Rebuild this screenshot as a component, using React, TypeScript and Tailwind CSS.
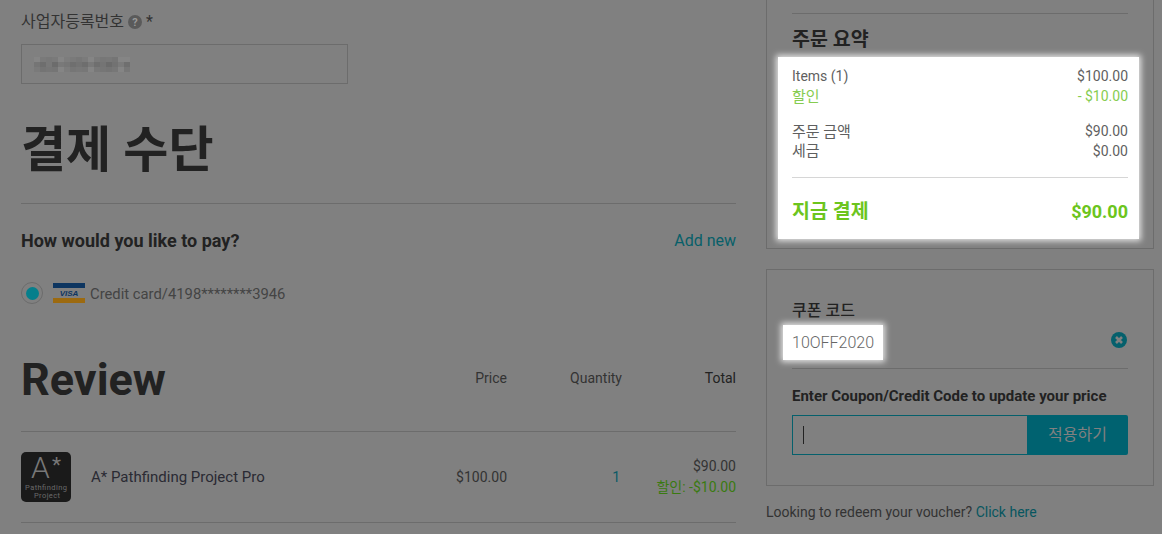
const font = "font-['Roboto','Noto_Sans_CJK_KR',sans-serif]";

// blurred business number, 6x5 cells
const mosaic = [
  ["#858585", "#7a7a7a", "#787878", "#7a7a7a", "#858585", "#7d7d7d", "#7a7a7a", "#777", "#7b7b7b", "#858585", "#7a7a7a", "#777", "#787878", "#757575", "#858585", "#858585"],
  ["#757575", "#6e6e6e", "#787878", "#6c6c6c", "#797979", "#767676", "#6f6f6f", "#737373", "#6e6e6e", "#797979", "#6f6f6f", "#747474", "#6b6b6b", "#727272", "#7b7b7b", "#6f6f6f"],
  ["#7a7a7a", "#747474", "#767676", "#757575", "#858585", "#7c7c7c", "#767676", "#787878", "#777", "#858585", "#787878", "#767676", "#747474", "#777", "#858585", "#777"],
];

const Spot = ({ className, children }: { className: string; children: React.ReactNode }) => (
  <div className={`bg-white shadow-[0_0_6px_2px_rgba(255,255,255,0.8)] ${className}`}>{children}</div>
);

const SummaryRow = ({ label, value, tone }: { label: React.ReactNode; value: string; tone: string }) => (
  <div className={`flex h-5 items-center justify-between text-sm ${tone}`}>
    <span>{label}</span>
    <span>{value}</span>
  </div>
);

const VisaCard = () => (
  <svg width="32" height="20" viewBox="0 0 32 20" className="shrink-0">
    <rect width="32" height="20" fill="#808080" />
    <rect width="32" height="5" fill="#0d3560" />
    <rect y="15" width="32" height="5" fill="#9c6a10" />
    <text x="16" y="13" textAnchor="middle" fontSize="8" fontWeight="700" fontStyle="italic" fill="#0d3560" fontFamily="Liberation Sans">VISA</text>
  </svg>
);

const ProductLogo = () => (
  <svg width="50" height="50" viewBox="0 0 50 50" className="shrink-0 overflow-visible" fontFamily="Roboto">
    <rect width="50" height="50" rx="5" fill="#1a1a1a" />
    <text x="10" y="26" fontSize="30" fontWeight="300" fill="#777">A</text>
    <text x="31" y="20" fontSize="21" fill="#777">*</text>
    <text x="4" y="38" fontSize="7.5" textLength="42" fill="#6a6a6a">Pathfinding</text>
    <text x="13" y="46" fontSize="7.5" textLength="26" fill="#6a6a6a">Project</text>
  </svg>
);

export default function App() {
  return (
    <div className={`flex h-[534px] w-[1162px] overflow-hidden bg-[#808080] text-[#222] ${font}`}>
      {/* left column */}
      <div className="ml-[21px] w-[715px] shrink-0">
        <div className="flex h-[44px] items-center gap-[4px] text-[16px] leading-none text-[#333]">
          <span>사업자등록번호</span>
          <span className="flex h-[14px] w-[14px] items-center justify-center rounded-full bg-[#5a5a5a] text-[11px] font-bold text-[#999]">?</span>
          <span>*</span>
        </div>
        <div className="flex h-[40px] w-[327px] items-center border border-[#6c6c6c] pl-3">
          <svg width="96" height="15" className="shrink-0">
            {mosaic.map((row, y) =>
              row.map((c, x) => <rect key={`${x}-${y}`} x={x * 6} y={y * 5} width="6" height="5" fill={c} />),
            )}
          </svg>
        </div>
        <h1 className="mt-[35px] text-[49px] leading-[64px] font-bold text-[#222]">결제 수단</h1>
        <div className="mt-[20px] border-t border-[#6c6c6c]" />
        <div className="mt-[27px] flex items-center justify-between">
          <span className="text-[18px] leading-5 font-bold">How would you like to pay?</span>
          <span className="text-[16px] leading-5 text-[#075f69]">Add new</span>
        </div>
        <div className="mt-[31px] flex h-[22px] items-center">
          <span className="flex h-[22px] w-[22px] items-center justify-center rounded-full border border-[#6c6c6c]">
            <span className="h-[13px] w-[13px] rounded-full bg-[#067f8c]" />
          </span>
          <span className="ml-[10px]"><VisaCard /></span>
          <span className="ml-[5px] pt-[2px] text-[14.8px] text-[#444]">Credit card/4198********3946</span>
        </div>
        <div className="mt-[45px] flex h-[60px] items-center">
          <h2 className="flex-1 text-[45px] leading-none font-bold">Review</h2>
          <span className="mb-[2px] w-[115px] text-right text-[14px] text-[#333]">Price</span>
          <span className="mb-[2px] w-[115px] text-right text-[14px] text-[#333]">Quantity</span>
          <span className="mb-[2px] w-[114px] text-right text-[14px] text-[#222]">Total</span>
        </div>
        <div className="mt-[22px] flex h-[92px] items-center border-y border-[#6c6c6c]">
          <ProductLogo />
          <span className="ml-[20px] flex-1 text-[15px] text-[#2a2a33]">A* Pathfinding Project Pro</span>
          <span className="w-[115px] text-right text-sm text-[#333]">$100.00</span>
          <span className="w-[115px] pr-[2px] text-right text-sm text-[#0b5a66]">1</span>
          <div className="w-[114px] text-right text-sm leading-[21px]">
            <div className="text-[#333]">$90.00</div>
            <div className="text-[#3a7a10]">할인: -$10.00</div>
          </div>
        </div>
      </div>

      {/* right column */}
      <div className="ml-[30px] w-[388px] shrink-0">
        <div className="h-[249px] border-x border-b border-[#6c6c6c] px-[25px] pt-[13px]">
          <div className="border-t border-[#6c6c6c]" />
          <h3 className="mt-[15px] text-[19.5px] leading-[22px] font-bold">주문 요약</h3>
          <Spot className="-mr-[11px] -ml-[14px] mt-[6px] h-[182px] pr-[11px] pl-[14px] pt-[9px]">
            <SummaryRow label="Items (1)" value="$100.00" tone="text-[#5f5f5f]" />
            <SummaryRow label={<span className="block pt-[3px] text-[15px]">할인</span>} value="- $10.00" tone="text-[#86cc50]" />
            <div className="h-[15px]" />
            <SummaryRow label={<span className="block pt-[3px] text-[15px]">주문 금액</span>} value="$90.00" tone="text-[#5f5f5f]" />
            <SummaryRow label={<span className="block pt-[2px] text-[15px]">세금</span>} value="$0.00" tone="text-[#5f5f5f]" />
            <div className="mt-[16px] border-t border-[#d6d6d6]" />
            <div className="mt-[22px] flex items-center justify-between text-[18px] leading-6 font-bold text-[#6cc51d]">
              <span className="text-[19.5px]">지금 결제</span>
              <span>$90.00</span>
            </div>
          </Spot>
        </div>

        <div className="mt-[20px] h-[217px] border border-[#6c6c6c] px-[25px]">
          <div className="mt-[31px] text-[16px] leading-5 font-medium text-[#222]">쿠폰 코드</div>
          <div className="relative mt-[4px] flex h-[35px] items-center">
            <Spot className="-ml-[9px] flex h-[35px] w-[100px] items-center pl-[9px] text-[16px] font-light text-[#666]">10OFF2020</Spot>
            <svg viewBox="0 0 16 16" className="absolute top-[7px] right-[1px] h-[16px] w-[16px]">
              <circle cx="8" cy="8" r="8" fill="#05606c" />
              <path d="M5 5l6 6M11 5l-6 6" stroke="#808080" strokeWidth="2.6" />
            </svg>
          </div>
          <div className="mt-[8px] border-t border-[#6c6c6c]" />
          <div className="mt-[17px] text-[15px] leading-5 font-bold whitespace-nowrap">Enter Coupon/Credit Code to update your price</div>
          <div className="mt-[9px] flex h-[40px] overflow-hidden rounded-r-[2px]">
            <div className="flex flex-1 items-center border border-r-0 border-[#05606c] pl-[10px]">
              <span className="h-[18px] w-px bg-[#222]" />
            </div>
            <button className="w-[101px] bg-[#006270] text-[16px] text-[#808080]">적용하기</button>
          </div>
        </div>
        <div className="mt-[16px] text-[14px] leading-5 text-[#333]">
          Looking to redeem your voucher? <span className="text-[#07565f]">Click here</span>
        </div>
      </div>
    </div>
  );
}
